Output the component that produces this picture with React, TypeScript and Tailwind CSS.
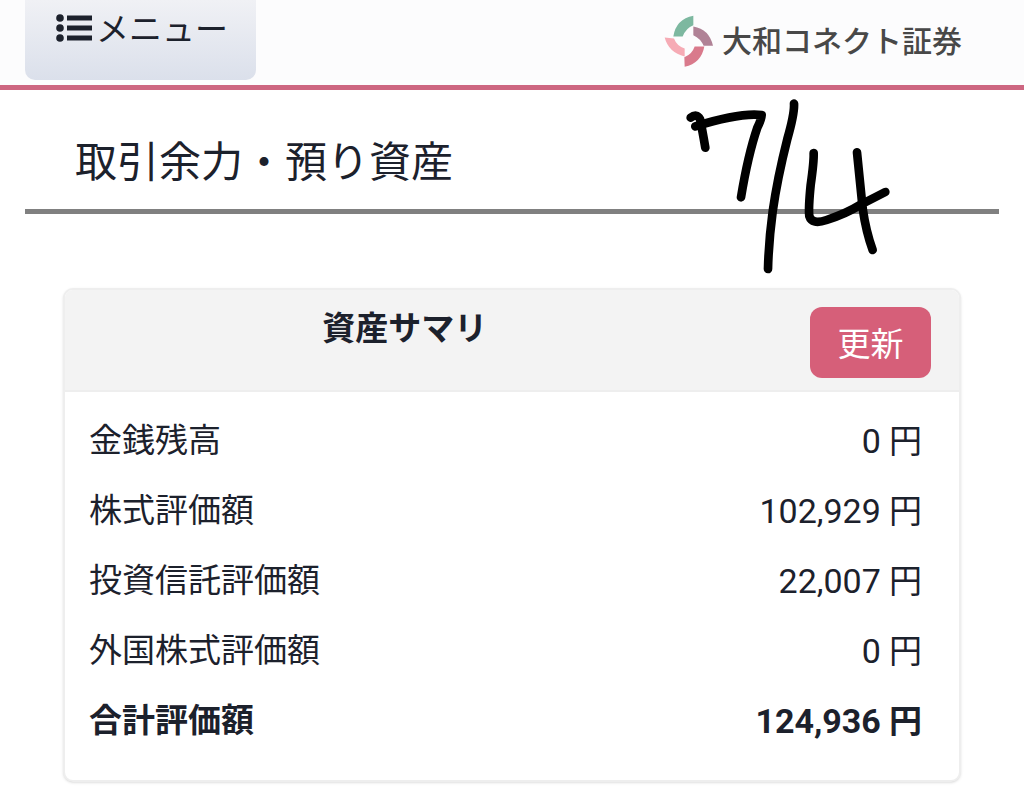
interface AssetRow {
  label: string
  value: string
  total?: boolean
}

const assetRows: AssetRow[] = [
  { label: '金銭残高', value: '0' },
  { label: '株式評価額', value: '102,929' },
  { label: '投資信託評価額', value: '22,007' },
  { label: '外国株式評価額', value: '0' },
  { label: '合計評価額', value: '124,936', total: true },
]

function ListIcon() {
  return (
    <svg viewBox="0 0 36 28" className="mt-3.5 h-7 w-9" fill="currentColor" aria-hidden="true">
      <circle cx="4" cy="4" r="3.8" />
      <circle cx="4" cy="14" r="3.8" />
      <circle cx="4" cy="24" r="3.8" />
      <rect x="11" y="1.5" width="25" height="5" />
      <rect x="11" y="11.5" width="25" height="5" />
      <rect x="11" y="21.5" width="25" height="5" />
    </svg>
  )
}

function LogoMark() {
  return (
    <svg viewBox="0 0 150 158" className="h-[53px] w-[50px]" aria-hidden="true">
      <path d="M88 2 L88 30 Q66 38 56 64 L28 64 Q36 12 88 2Z" fill="#7db8a0" />
      <path d="M88 34 Q136 42 147 92 L119 92 Q110 70 88 60Z" fill="#b08296" />
      <path d="M92 94 L121 94 Q112 144 62 155 L61 126 Q84 118 92 94Z" fill="#d97a8c" />
      <path d="M2 67 L30 70 Q38 92 62 100 L62 124 Q14 112 2 67Z" fill="#f6abb5" />
    </svg>
  )
}

// 手書きの日付メモ
function DateMemo() {
  return (
    <svg
      viewBox="0 0 780 600"
      className="pointer-events-none absolute -top-[5px] right-[104px] h-[200px] w-[260px]"
      fill="none"
      stroke="#000"
      strokeWidth="26"
      strokeLinecap="round"
      strokeLinejoin="round"
      role="img"
      aria-label="7/4"
    >
      <path d="M92 98 Q110 84 120 102 Q126 130 136 188" />
      <path d="M106 124 Q240 82 305 90 Q304 104 292 128 Q264 210 243 337" />
      <path d="M402 56 Q404 85 382 162 Q352 280 338 380 Q326 470 324 552" />
      <path d="M461 204 Q462 230 452 300 Q445 370 448 394 Q456 420 500 405 Q560 385 600 360 L676 321" />
      <path d="M591 202 Q600 290 608 370 Q618 440 638 495" />
    </svg>
  )
}

function Header() {
  return (
    <header className="flex h-[90px] items-start justify-between border-b-[5px] border-[#cd6681] bg-[#fcfcfd] pr-[62px] pl-[25px]">
      <button
        type="button"
        className="flex h-20 w-[231px] items-start gap-1 rounded-b-[10px] bg-linear-to-b from-[#f0f1f5] to-[#dbe0eb] pl-[31px] text-[33px] leading-[60px]"
      >
        <ListIcon />
        メニュー
      </button>
      <a href="#" className="mt-[15px] flex items-center gap-2 text-[30px] font-medium text-[#484848]">
        <LogoMark />
        大和コネクト証券
      </a>
    </header>
  )
}

function AssetSummary() {
  return (
    <section className="mx-[63px] mt-[74px] overflow-hidden rounded-[10px] border-2 border-[#eeeeee] bg-white shadow-sm">
      <div className="grid grid-cols-[3fr_1fr] items-start border-b-2 border-[#eeeeee] bg-[#f3f3f3] pt-[17px] pr-7 pb-3 pl-6">
        <h2 className="text-center text-[33px] leading-[44px] font-bold">資産サマリ</h2>
        <button
          type="button"
          className="h-[71px] w-[121px] justify-self-end rounded-[12px] bg-[#d65f79] pt-1 text-[33px] text-white"
        >
          更新
        </button>
      </div>
      <div className="pt-[14px] pr-[37px] pb-6 pl-6">
        <table className="w-full text-[33px] leading-[46px]">
          <tbody>
            {assetRows.map(row => (
              <tr key={row.label} className={`h-[70px] ${row.total ? 'font-bold' : 'font-normal'}`}>
                <th scope="row" className={`text-left ${row.total ? 'font-bold' : 'font-normal'}`}>
                  {row.label}
                </th>
                <td className="text-right">
                  <span className="text-[34px]">{row.value}</span> 円
                </td>
              </tr>
            ))}
          </tbody>
        </table>
      </div>
    </section>
  )
}

export default function App() {
  return (
    <div className="min-h-screen bg-white font-[Roboto,'Noto_Sans_CJK_JP',sans-serif] text-[#1c212c]" lang="ja">
      <Header />
      <main className="relative">
        <h1 className="mx-[25px] border-b-[5px] border-[#808080] pt-[43px] pb-4 pl-[50px] text-[42px] leading-[60px]">
          取引余力・預り資産
        </h1>
        <DateMemo />
        <AssetSummary />
      </main>
    </div>
  )
}
